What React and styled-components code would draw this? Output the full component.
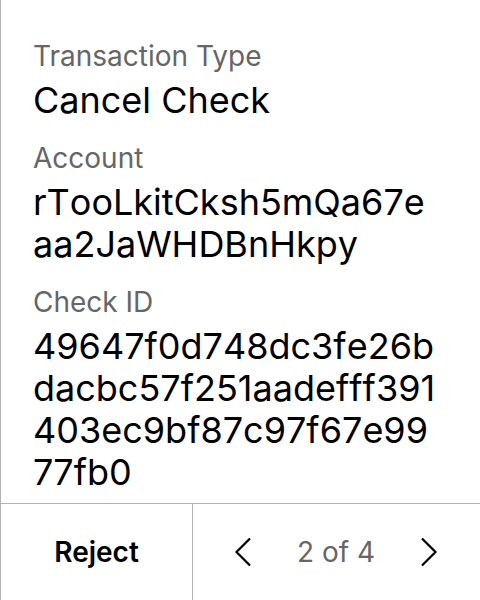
import styled, { createGlobalStyle } from 'styled-components';

const Global = createGlobalStyle`
	html, body {
		margin: 0;
		padding: 0;
		background: #fff;
	}
	body {
		font-family: Inter, "Noto Sans", sans-serif;
	}
`;

const Screen = styled.div`
	width: 480px;
	height: 600px;
	box-sizing: border-box;
	border-left: 1px solid #b3b3b3;
	display: flex;
	flex-direction: column;
	background: #fff;
	color: #000;
`;

const Details = styled.div`
	flex: 1;
	padding: 39px 41px 0 32px;
	display: flex;
	flex-direction: column;
	gap: 20px;
`;

const Field = styled.div`
	display: flex;
	flex-direction: column;
	gap: 6px;
`;

const Label = styled.div`
	font-size: 28px;
	line-height: 34px;
	color: #666;
`;

const Value = styled.div`
	font-size: 36px;
	line-height: 42px;
	color: #000;
	font-kerning: none;
	word-break: break-all;
`;

const Footer = styled.div`
	height: 96px;
	border-top: 1px solid #b3b3b3;
	display: grid;
	grid-template-columns: 192px 1fr;
`;

const Reject = styled.button`
	border: none;
	border-right: 1px solid #b3b3b3;
	background: none;
	font: 600 28px Inter, sans-serif;
	color: #000;
	padding: 0;
`;

const Pager = styled.div`
	display: flex;
	align-items: center;
	justify-content: space-between;
	padding: 0 41px 0 40px;
`;

const Count = styled.span`
	font-size: 28px;
	color: #666;
`;

const Arrow = ({ dir }) => (
	<svg width='20' height='30' viewBox='0 0 20 30' fill='none' stroke='#000' strokeWidth='2.2'>
		{dir === 'left' ? <path d='M17 1.5 L3.5 15 L17 28.5' /> : <path d='M3 1.5 L16.5 15 L3 28.5' />}
	</svg>
);

const fields = [
	{ label: 'Transaction Type', value: 'Cancel Check' },
	{ label: 'Account', value: 'rTooLkitCksh5mQa67eaa2JaWHDBnHkpy' },
	{ label: 'Check ID', value: '49647f0d748dc3fe26bdacbc57f251aadefff391403ec9bf87c97f67e9977fb0' },
];

const App = () => {
	return (
		<Screen>
			<Global />
			<Details>
				{fields.map((f) => (
					<Field key={f.label}>
						<Label>{f.label}</Label>
						<Value>{f.value}</Value>
					</Field>
				))}
			</Details>
			<Footer>
				<Reject>Reject</Reject>
				<Pager>
					<Arrow dir='left' />
					<Count>2 of 4</Count>
					<Arrow dir='right' />
				</Pager>
			</Footer>
		</Screen>
	);
};

export default App;
